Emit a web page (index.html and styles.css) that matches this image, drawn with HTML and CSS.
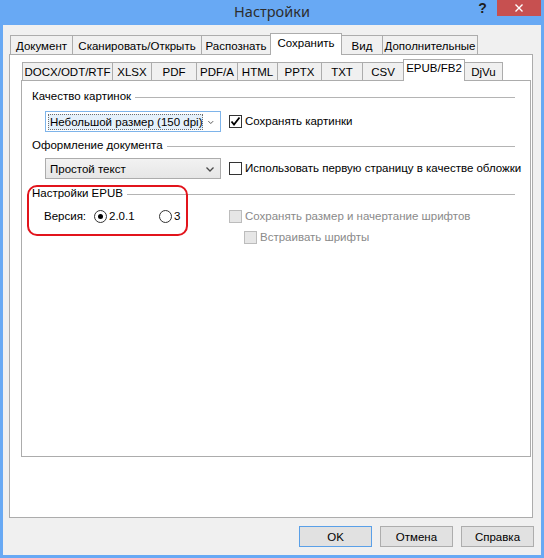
FILE: index.html
```html
<!DOCTYPE html>
<html lang="ru">
<head>
  <meta charset="UTF-8" />
  <title>Настройки</title>
  <link rel="stylesheet" href="styles.css">
</head>
<body>
  <div class="titlebar">
    <div class="title">Настройки</div>
    <div class="caption-buttons">
      <span class="help">?</span>
      <span class="close">
        <svg width="8" height="8" viewBox="0 0 8 8"><path d="M0.5 0.5 L7.5 7.5 M7.5 0.5 L0.5 7.5" stroke="#fff" stroke-width="1.4"/></svg>
      </span>
    </div>
  </div>

  <div class="client">
    <div class="tabs main-tabs">
      <div class="tab">Документ</div>
      <div class="tab">Сканировать/Открыть</div>
      <div class="tab">Распознать</div>
      <div class="tab active">Сохранить</div>
      <div class="tab">Вид</div>
      <div class="tab last">Дополнительные</div>
    </div>

    <div class="outer-panel">
      <div class="tabs sub-tabs">
        <div class="tab">DOCX/ODT/RTF</div>
        <div class="tab">XLSX</div>
        <div class="tab">PDF</div>
        <div class="tab">PDF/A</div>
        <div class="tab">HTML</div>
        <div class="tab">PPTX</div>
        <div class="tab">TXT</div>
        <div class="tab">CSV</div>
        <div class="tab active">EPUB/FB2</div>
        <div class="tab last">DjVu</div>
      </div>

      <div class="inner-panel">
        <div class="group-title first"><span>Качество картинок</span><i></i></div>
        <div class="row row-images">
          <div class="select focused">
            <span class="value">Небольшой размер (150 dpi)</span>
            <svg class="arrow" width="8" height="5" viewBox="0 0 8 5"><path d="M0.5 0.5 L4 4 L7.5 0.5" fill="none" stroke="#4a4a4a" stroke-width="1.3"/></svg>
          </div>
          <label class="check">
            <span class="box">
              <svg width="11" height="11" viewBox="0 0 11 11"><path d="M1.5 5.5 L4 8.5 L9.5 1.5" fill="none" stroke="#000" stroke-width="1.8"/></svg>
            </span>
            Сохранять картинки
          </label>
        </div>

        <div class="group-title second"><span>Оформление документа</span><i></i></div>
        <div class="row row-layout">
          <div class="select">
            <span class="value">Простой текст</span>
            <svg class="arrow" width="8" height="5" viewBox="0 0 8 5"><path d="M0.5 0.5 L4 4 L7.5 0.5" fill="none" stroke="#4a4a4a" stroke-width="1.3"/></svg>
          </div>
          <label class="check">
            <span class="box"></span>
            Использовать первую страницу в качестве обложки
          </label>
        </div>

        <div class="group-title third"><span>Настройки EPUB</span><i></i></div>
        <div class="epub">
          <div class="version">
            <span class="version-label">Версия:</span>
            <label class="radio first-option"><span class="dot checked"></span>2.0.1</label>
            <label class="radio"><span class="dot"></span>3</label>
          </div>
          <div class="fonts">
            <label class="check disabled"><span class="box"></span>Сохранять размер и начертание шрифтов</label>
            <label class="check disabled sub"><span class="box"></span>Встраивать шрифты</label>
          </div>
        </div>

        <div class="highlight"></div>
      </div>
    </div>

    <div class="buttons">
      <button class="default">OK</button>
      <button>Отмена</button>
      <button>Справка</button>
    </div>
  </div>
</body>
</html>
```

FILE: styles.css
```css
* {
  box-sizing: border-box;
}
html, body {
  margin: 0;
  padding: 0;
}
body {
  width: 544px;
  height: 558px;
  overflow: hidden;
  background: #68a9f4;
  font-family: "Liberation Sans", Arial, sans-serif;
  font-size: 11.5px;
  color: #000;
}

/* window caption */
.titlebar {
  height: 25px;
  display: grid;
  grid-template-columns: 1fr auto 1fr;
}
.title {
  grid-column: 2;
  font-family: "Noto Sans", sans-serif;
  font-size: 14.5px;
  line-height: 23px;
  color: #2d2d2d;
}
.caption-buttons {
  grid-column: 3;
  display: flex;
  justify-content: flex-end;
  align-items: flex-start;
  padding-right: 3px;
}
.help {
  width: 29px;
  height: 16px;
  text-align: center;
  font-size: 14px;
  font-weight: bold;
  line-height: 16px;
  color: #1e1e1e;
}
.close {
  width: 44px;
  height: 16px;
  background: #c75050;
  display: flex;
  align-items: center;
  justify-content: center;
}

/* client area */
.client {
  margin: 0 3px;
  height: 530px;
  background: #f0f0f0;
  padding: 8px 0 0 6px;
}

/* tabs */
.tabs {
  display: grid;
  align-items: end;
  padding-left: 1px;
}
.main-tabs {
  height: 21px;
  grid-template-columns: 62px 129px 69px 71px 41px 96px;
}
.sub-tabs {
  height: 21px;
  grid-template-columns: 90px 39px 45px 41px 40px 44px 41px 41px 61px 39px;
}
.tab {
  height: 19px;
  border: 1px solid #acacac;
  border-right: none;
  border-bottom: none;
  background: #f0f0f0;
  display: flex;
  align-items: center;
  justify-content: center;
  white-space: nowrap;
  padding-top: 1px;
}
.sub-tabs .tab {
  height: 18px;
}
.tab.last {
  border-right: 1px solid #acacac;
}
.tab.active {
  position: relative;
  z-index: 1;
  background: #fff;
  border-right: 1px solid #acacac;
  margin-right: -1px;
  margin-bottom: -1px;
  height: 22px;
  padding-top: 0;
  padding-bottom: 4px;
}
.sub-tabs .tab.active {
  height: 22px;
  padding-bottom: 6px;
}

.outer-panel {
  width: 524px;
  height: 464px;
  border: 1px solid #acacac;
  background: #fff;
  padding: 4px 0 0 11px;
}
.inner-panel {
  position: relative;
  width: 510px;
  height: 377px;
  border: 1px solid #acacac;
}

/* group boxes */
.group-title {
  display: flex;
  height: 16px;
  line-height: 16px;
  margin: 0 15px 0 10px;
}
.group-title i {
  flex: 1;
  height: 1px;
  background: #b4b4b4;
  margin: 9px 0 0 4px;
}
.group-title.first {
  margin-top: 7px;
}
.group-title.second {
  margin-top: 5px;
}
.group-title.third {
  margin-top: 6px;
}

.row {
  display: flex;
  align-items: flex-start;
  margin-left: 23px;
  height: 21px;
}
.row-images {
  margin-top: 7px;
}
.row-layout {
  margin-top: 5px;
}

.select {
  width: 176px;
  height: 21px;
  border: 1px solid #acacac;
  background: linear-gradient(#f2f2f2, #e6e6e6);
  display: flex;
  align-items: center;
  padding: 0 6px 0 2px;
  white-space: nowrap;
}
.select .value {
  flex: 1;
  padding-left: 1px;
  line-height: 14px;
  border: 1px dotted transparent;
}
.select.focused {
  border-color: #7eb4ea;
  background: #fff;
}
.select.focused .value {
  background: #e5f1fb;
  border-color: #6f6f6f;
  margin-right: 5px;
}
.select .arrow {
  margin-top: 1px;
}

.check {
  display: flex;
  align-items: center;
  height: 16px;
  margin: 2px 0 0 8px;
  white-space: nowrap;
}
.check .box {
  width: 13px;
  height: 13px;
  border: 1px solid #333;
  background: #fff;
  margin-right: 3px;
  display: flex;
  align-items: center;
  justify-content: center;
}
.check.disabled {
  color: #8a8a8a;
  margin: 0;
}
.check.disabled .box {
  border-color: #bcbcbc;
  background: #e6e6e6;
}
.check.sub {
  margin: 5px 0 0 15px;
}

/* epub settings */
.epub {
  display: flex;
  margin: 7px 0 0 22px;
}
.version {
  width: 185px;
  display: flex;
  align-items: center;
  height: 16px;
}
.version-label {
  width: 50px;
}
.radio {
  display: flex;
  align-items: center;
}
.radio.first-option {
  width: 65px;
}
.radio .dot {
  width: 13px;
  height: 13px;
  border: 1px solid #333;
  border-radius: 50%;
  background: #fff;
  margin-right: 2px;
  display: flex;
  align-items: center;
  justify-content: center;
}
.radio .dot.checked::after {
  content: "";
  width: 5px;
  height: 5px;
  border-radius: 50%;
  background: #000;
}
.fonts {
  display: flex;
  flex-direction: column;
}

/* red annotation around the EPUB version */
.highlight {
  position: absolute;
  left: 5px;
  top: 104px;
  width: 161px;
  height: 51px;
  border: 2px solid #e2141c;
  border-radius: 10px;
}

/* dialog buttons */
.buttons {
  display: flex;
  justify-content: flex-end;
  gap: 8px;
  margin: 8px 7px 0 0;
}
button {
  width: 73px;
  height: 21px;
  border: 1px solid #adadad;
  background: #e1e1e1;
  font-family: "Liberation Sans", Arial, sans-serif;
  font-size: 11.5px;
  color: #000;
  padding: 0;
}
button.default {
  border-color: #5aa0e8;
}
```
